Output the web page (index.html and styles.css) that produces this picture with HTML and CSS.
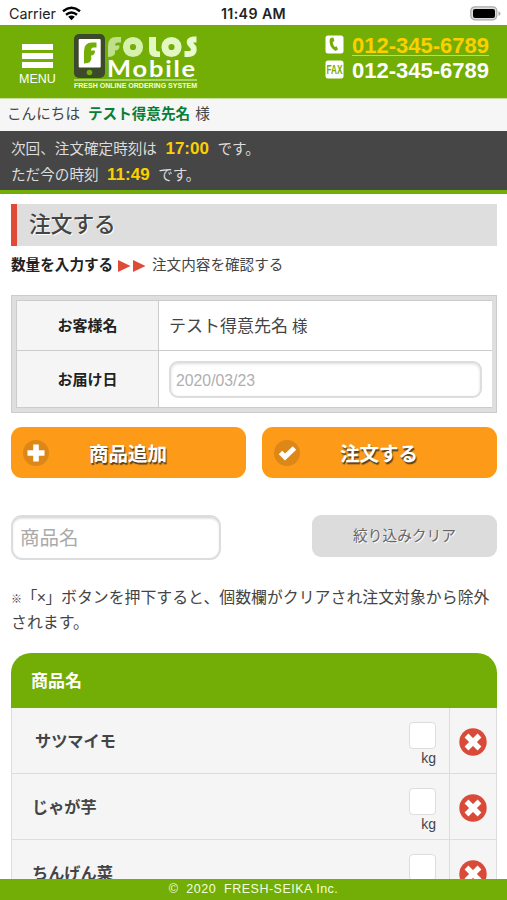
FILE: index.html
```html
<!DOCTYPE html>
<html lang="ja">
<head>
<meta charset="utf-8">
<title>FOLOS Mobile</title>
<link rel="stylesheet" href="styles.css">
</head>
<body>
<div class="app">
  <div class="status">
    <div class="carrier">Carrier
      <svg width="19" height="15" viewBox="0 0 19 15"><g fill="none" stroke="#000" stroke-width="2.4"><path d="M1 5.2Q9.5-1.6 18 5.2"/><path d="M4 8.7Q9.5 4.2 15 8.7"/></g><path d="M6.2 10.8Q9.5 8.4 12.8 10.8L9.5 14.2Z"/></svg>
    </div>
    <div class="clock">11:49 AM</div>
    <svg class="battery" width="31" height="15" viewBox="0 0 31 15"><rect x=".8" y=".8" width="26" height="13" rx="4" fill="#ddd" stroke="#aaa" stroke-width="1.2"/><rect x="3" y="3" width="22" height="9" rx="2"/><path d="M28.5 5v5q2-1 2-2.500t-2-2.500z" fill="#aaa"/></svg>
  </div>
  <header class="header">
    <div class="menu"><i></i><i></i><i></i><span>MENU</span></div>
    <svg class="logo" width="126" height="60" viewBox="0 0 126 60">
      <rect x="0" y="0" width="31" height="44" rx="5" fill="#3c4a2b"/>
      <rect x="4.700" y="5" width="22" height="28.500" rx="1" fill="#fff"/>
      <circle cx="15.500" cy="38.500" r="2.800" fill="#72ae06"/>
      <path d="M10 29.500V17Q10 8.500 18 8.500H22.500V13.500H19.500Q17 13.500 17 16.500H21Q21 21.500 17 21.500Q19 29.500 10 29.500Z" fill="#72ae06"/>
      <path d="M34 23V12Q34 3 42 3H47V8.500H44Q41 8.500 41 11.500H45.500Q45.500 16.500 41 16.500Q42.500 23 34 23Z" fill="#bfe08a"/>
      <circle cx="59" cy="13" r="6.600" fill="none" stroke="#d6f0ae" stroke-width="7"/>
      <path d="M75 3H82V15.500Q82 17.500 86 17.500V23H82Q75 23 75 16Z" fill="#e2f7c2"/>
      <circle cx="97.500" cy="13" r="6.600" fill="none" stroke="#e2f7c2" stroke-width="7"/>
      <path d="M122.500 5.500H119.500Q114.500 6 116 9.500L119.500 13.500Q121 20 114 20H110.500" fill="none" stroke="#e9fbd0" stroke-width="5.800"/>
      <text class="logo-mobile" x="33" y="42.500" textLength="90" lengthAdjust="spacingAndGlyphs">Mobile</text>
      <path d="M0 46H123" stroke="#e9fbd0" stroke-width="1"/>
      <text class="logo-tag" x="0" y="54" textLength="123" lengthAdjust="spacingAndGlyphs">FRESH ONLINE ORDERING SYSTEM</text>
    </svg>
    <div class="contacts">
      <div class="contact"><svg width="19" height="19" viewBox="0 0 19 19"><rect x=".5" y=".5" width="18" height="18" rx="2.500" fill="#fff"/><path d="M5.500 3L8.500 2.500L9.300 6L7.700 7.200Q8 10 9.800 12L11.700 11.300L13 14.500L10.500 16Q5 13 4.600 7Q4.500 4 5.500 3Z" fill="#72ae06"/></svg><a class="tel">012-345-6789</a></div>
      <div class="contact"><svg width="19" height="19" viewBox="0 0 19 19"><rect x=".5" y=".5" width="18" height="18" rx="2.500" fill="#fff"/><text class="fax" x="1.500" y="14.200" textLength="16" lengthAdjust="spacingAndGlyphs">FAX</text></svg><span>012-345-6789</span></div>
    </div>
  </header>
  <div class="greeting">こんにちは<b>テスト得意先名</b>様</div>
  <div class="notice">
    <div>次回、注文確定時刻は<b>17:00</b>です。</div>
    <div>ただ今の時刻<b>11:49</b>です。</div>
  </div>
  <main class="main">
    <h1 class="title">注文する</h1>
    <div class="steps"><b>数量を入力する</b><svg width="28" height="14" viewBox="0 0 28 14"><path d="M0 1L12.500 7L0 13ZM15 1L27.500 7L15 13Z" fill="#e04b37"/></svg><span>注文内容を確認する</span></div>
    <div class="info">
      <div class="label name">お客様名</div>
      <div class="value name">テスト得意先名 <small>様</small></div>
      <div class="label">お届け日</div>
      <div class="value"><div class="date">2020/03/23</div></div>
    </div>
    <div class="actions">
      <div class="action"><svg width="26" height="26" viewBox="0 0 26 26"><circle cx="13" cy="13" r="13" fill="#dc8718"/><path d="M13 4.500V21.500M4.500 13H21.500" stroke="#fff" stroke-width="5.600"/></svg><span>商品追加</span></div>
      <div class="action"><svg width="26" height="26" viewBox="0 0 26 26"><circle cx="13" cy="13" r="13" fill="#dc8718"/><path d="M6.500 12.500L11 17L20.500 8" fill="none" stroke="#fff" stroke-width="5"/></svg><span>注文する</span></div>
    </div>
    <div class="filter"><div class="search">商品名</div><div class="clear">絞り込みクリア</div></div>
    <div class="note"><div><span class="mark"><small>※</small>「×」</span>ボタンを押下すると、個数欄がクリアされ注文対象から除外</div><div>されます。</div></div>
    <div class="list">
      <div class="list-head">商品名</div>
      <div class="row"><div class="item first">サツマイモ</div><div class="qty"><i></i><span>kg</span></div><div class="remove"><svg width="28" height="28" viewBox="0 0 28 28"><circle cx="14" cy="14" r="13.700" fill="#d94b39"/><path d="M7.500 7.500L20.500 20.500M20.500 7.500L7.500 20.500" stroke="#fff" stroke-width="5.400"/></svg></div></div>
      <div class="row"><div class="item">じゃが芋</div><div class="qty"><i></i><span>kg</span></div><div class="remove"><svg width="28" height="28" viewBox="0 0 28 28"><circle cx="14" cy="14" r="13.700" fill="#d94b39"/><path d="M7.500 7.500L20.500 20.500M20.500 7.500L7.500 20.500" stroke="#fff" stroke-width="5.400"/></svg></div></div>
      <div class="row"><div class="item">ちんげん菜</div><div class="qty"><i></i></div><div class="remove"><svg width="28" height="28" viewBox="0 0 28 28"><circle cx="14" cy="14" r="13.700" fill="#d94b39"/><path d="M7.500 7.500L20.500 20.500M20.500 7.500L7.500 20.500" stroke="#fff" stroke-width="5.400"/></svg></div></div>
    </div>
  </main>
  <footer class="footer">©&nbsp; 2020&nbsp; FRESH-SEIKA Inc.</footer>
</div>
</body>
</html>
```

FILE: styles.css
```css
* { box-sizing: border-box; }
body { margin: 0; background: #fff; color: #444; font-family: "Liberation Sans", "Noto Sans CJK JP", sans-serif; white-space: nowrap; }
svg { display: block; flex: none; }
.app { width: 507px; height: 900px; display: flex; flex-direction: column; overflow: hidden; }

.status { height: 25px; flex: none; display: grid; grid-template-columns: 1fr auto 1fr; align-items: center; padding: 2px 6px 0 9px; color: #222; }
.carrier { display: flex; align-items: center; gap: 6px; font: 14.3px/22px Inter, sans-serif; }
.clock { font: 600 14.2px/22px Inter, sans-serif; margin-left: -3px; letter-spacing: .4px; }
.battery { justify-self: end; }

.header { height: 74px; flex: none; display: flex; background: #72ae06; border-bottom: 1px solid #c6df9b; padding: 9px 18px 0 19px; color: #fff; }
.menu { width: 37px; display: flex; flex-direction: column; align-items: center; gap: 3px; padding-top: 10px; font-size: 12.5px; }
.menu i { width: 31px; height: 6px; background: #fff; }
.menu span { line-height: 14px; margin-top: 1px; }
.logo { margin-left: 18px; }
.logo-mobile { font: 700 22.5px Lato, sans-serif; letter-spacing: 1.6px; fill: #fff; }
.logo-tag { font: 700 8px "Liberation Sans", sans-serif; fill: #f2ffdf; }
.contacts { margin-left: auto; }
.contact { display: flex; align-items: center; gap: 8px; height: 24px; margin-bottom: 1px; font: bold 22px/24px "Liberation Sans", sans-serif; }
.contact svg { margin-top: -3px; }
.tel { color: #fcd000; text-decoration: underline; text-decoration-thickness: 1px; text-underline-offset: 2px; }
.fax { font: 700 12px "Liberation Sans", sans-serif; fill: #72ae06; }

.greeting { height: 32px; flex: none; padding-left: 7px; background: #f6f6f6; font-size: 14.6px; line-height: 31px; }
.greeting b { color: #087d36; margin: 0 5px 0 8px; }
.notice { height: 63px; flex: none; padding: 4px 11px 0; background: #464646; border-bottom: 4px solid #72ae06; color: #ddd; font-size: 14.6px; line-height: 27px; }
.notice > div { height: 26px; }
.notice b { margin: 0 8.5px; color: #fcd000; font-size: 17px; }

.main { flex: 1; min-height: 0; padding: 10px 10px 0 11px; overflow: hidden; }
.title { margin: 0; height: 42px; padding-left: 12px; background: #dedede; border-left: 6px solid #e04b37; font-size: 21.7px; font-weight: 500; line-height: 41px; text-shadow: 1px 1px #fff; }
.steps { display: flex; align-items: center; height: 37px; font-size: 14.6px; line-height: 20px; }
.steps b { width: 107px; color: #222; }
.steps svg { margin-top: 2px; }
.steps span { margin-left: 6px; }
.info { display: grid; grid-template-columns: 141px 1fr; grid-template-rows: 49px 56px; gap: 1px; height: 118px; margin-top: 12px; padding: 5px; border: 1px solid #ccc; background: #ccc; box-shadow: inset 0 0 0 4px #dedede; }
.label, .value { display: flex; align-items: center; }
.label { justify-content: center; padding-bottom: 2px; background: #f5f5f5; color: #222; font-size: 15px; font-weight: bold; }
.value { padding: 0 10px; background: #fff; font-size: 17px; }
.value.name { padding-bottom: 2px; }
.value small { margin-left: 4px; font-size: 15.5px; }
.date { width: 313px; height: 37px; padding-left: 5px; border: 2px solid #ddd; border-radius: 9px; box-shadow: inset 0 1px 3px #ddd; color: #b0b0b0; font-size: 15.8px; line-height: 35px; }
.actions { display: grid; grid-template-columns: 235px 235px; gap: 16px; margin-top: 14px; }
.action { display: flex; align-items: center; height: 51px; padding-left: 12px; border-radius: 11px; background: #fd9b18; color: #fff; font-size: 19.5px; font-weight: bold; text-shadow: 1px 2px 1px #54401f; }
.action span { margin-left: 40px; }
.filter { display: flex; justify-content: space-between; height: 45px; margin-top: 37px; }
.search { width: 210px; height: 45px; padding-left: 7px; border: 2px solid #ddd; border-top-width: 3px; border-radius: 11px; box-shadow: inset 0 1px 2px #e5e5e5; color: #aaa; font-size: 19.5px; line-height: 40px; }
.clear { width: 185px; height: 42px; border-radius: 9px; background: #dcdcdc; color: #666; font-size: 14.7px; line-height: 43px; text-align: center; text-shadow: 1px 1px #fff; }
.note { height: 50px; margin-top: 25px; font-size: 15.9px; line-height: 25px; }
.note > div { height: 25px; }
.mark { display: inline-block; width: 50px; letter-spacing: -.6px; }
.mark small { font-size: 11px; }
.list { margin-top: 18px; }
.list-head { height: 55px; padding-left: 20px; border-radius: 20px 20px 0 0; background: #72ae06; color: #fff; font-size: 17px; font-weight: bold; line-height: 57px; }
.row { display: grid; grid-template-columns: 1fr 48px 47px; height: 66px; border: solid #ddd; border-width: 0 1px 1px; background: #f5f5f5; }
.item { padding-left: 20px; font-size: 16.2px; font-weight: bold; line-height: 67px; }
.item.first { padding-left: 23px; }
.qty { display: flex; flex-direction: column; align-items: flex-end; padding: 14px 13px 0 0; margin-left: -12px; font-size: 14px; }
.qty i { width: 27px; height: 27px; border: 1px solid #ddd; border-radius: 4px; background: #fff; }
.qty span { line-height: 18px; }
.remove { display: grid; place-items: center; border-left: 1px solid #ddd; }
.footer { height: 21px; flex: none; background: #72ae06; color: #f4ffdf; font-size: 12.5px; line-height: 21px; text-align: center; letter-spacing: .5px; }
```
